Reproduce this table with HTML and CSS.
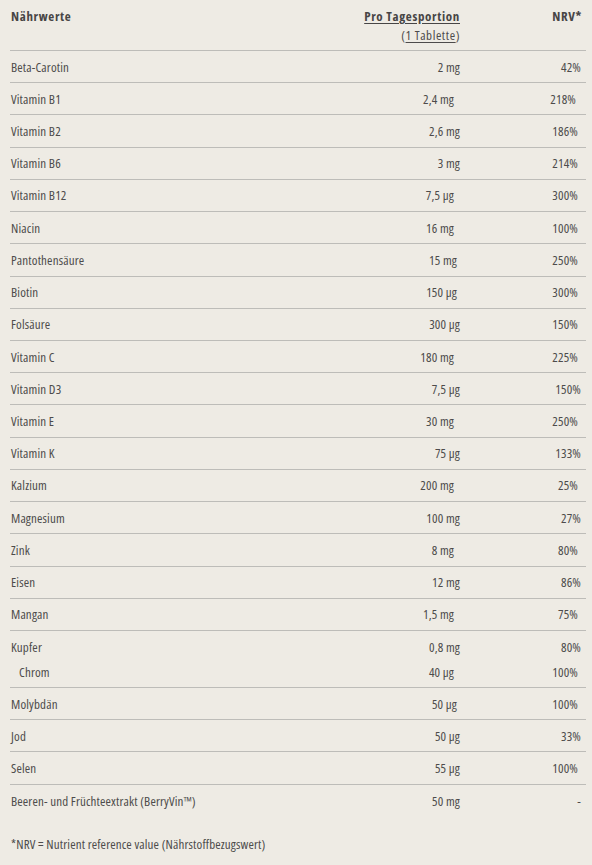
FILE: index.html
```html
<!DOCTYPE html>
<html lang="de">
<head>
<meta charset="utf-8">
<title>Nährwerte</title>
<link rel="stylesheet" href="styles.css">
</head>
<body>
<div class="wrap">
  <div class="table">
    <div class="row head">
      <div class="c1">Nährwerte</div>
      <div class="c2"><span class="u">Pro Tagesportion</span><br><span class="sub">(<span class="u">1 Tablette</span>)</span></div>
      <div class="c3">NRV*</div>
    </div>
    <div class="row"><div class="c1">Beta-Carotin</div><div class="c2">2 mg</div><div class="c3">42%</div></div>
    <div class="row"><div class="c1">Vitamin B1</div><div class="c2 i2">2,4 mg</div><div class="c3 i2">218%</div></div>
    <div class="row"><div class="c1">Vitamin B2</div><div class="c2">2,6 mg</div><div class="c3 i1">186%</div></div>
    <div class="row"><div class="c1">Vitamin B6</div><div class="c2">3 mg</div><div class="c3 i1">214%</div></div>
    <div class="row"><div class="c1">Vitamin B12</div><div class="c2 i2">7,5 µg</div><div class="c3 i1">300%</div></div>
    <div class="row"><div class="c1">Niacin</div><div class="c2 i2">16 mg</div><div class="c3 i1">100%</div></div>
    <div class="row"><div class="c1">Pantothensäure</div><div class="c2 i1">15 mg</div><div class="c3 i1">250%</div></div>
    <div class="row"><div class="c1">Biotin</div><div class="c2 i1">150 µg</div><div class="c3 i1">300%</div></div>
    <div class="row"><div class="c1">Folsäure</div><div class="c2">300 µg</div><div class="c3 i1">150%</div></div>
    <div class="row"><div class="c1">Vitamin C</div><div class="c2 i2">180 mg</div><div class="c3 i1">225%</div></div>
    <div class="row"><div class="c1">Vitamin D3</div><div class="c2">7,5 µg</div><div class="c3">150%</div></div>
    <div class="row"><div class="c1">Vitamin E</div><div class="c2 i2">30 mg</div><div class="c3 i1">250%</div></div>
    <div class="row"><div class="c1">Vitamin K</div><div class="c2">75 µg</div><div class="c3">133%</div></div>
    <div class="row"><div class="c1">Kalzium</div><div class="c2 i2">200 mg</div><div class="c3 i1">25%</div></div>
    <div class="row"><div class="c1">Magnesium</div><div class="c2">100 mg</div><div class="c3">27%</div></div>
    <div class="row"><div class="c1">Zink</div><div class="c2 i2">8 mg</div><div class="c3 i1">80%</div></div>
    <div class="row"><div class="c1">Eisen</div><div class="c2">12 mg</div><div class="c3">86%</div></div>
    <div class="row"><div class="c1">Mangan</div><div class="c2 i2">1,5 mg</div><div class="c3 i1">75%</div></div>
    <div class="row double">
      <div class="c1">Kupfer</div><div class="c2">0,8 mg</div><div class="c3">80%</div>
      <div class="c1 indent">Chrom</div><div class="c2 i2">40 µg</div><div class="c3 i1">100%</div>
    </div>
    <div class="row"><div class="c1">Molybdän</div><div class="c2 i1">50 µg</div><div class="c3 i1">100%</div></div>
    <div class="row"><div class="c1">Jod</div><div class="c2">50 µg</div><div class="c3">33%</div></div>
    <div class="row"><div class="c1">Selen</div><div class="c2">55 µg</div><div class="c3 i1">100%</div></div>
    <div class="row last"><div class="c1">Beeren- und Früchteextrakt (BerryVin™)</div><div class="c2">50 mg</div><div class="c3">-</div></div>
  </div>
  <p class="note">*NRV = Nutrient reference value (Nährstoffbezugswert)</p>
</div>
</body>
</html>
```

FILE: styles.css
```css
html, body {
  margin: 0;
  padding: 0;
  background: #eeebe4;
}
body {
  font-family: "Open Sans", Lato, sans-serif;
  font-stretch: 75%;
  font-size: 13px;
  letter-spacing: 0.15px;
  color: #4d4b4b;
}
.wrap {
  padding: 0 6px 0 10px;
}
.table {
  display: flex;
  flex-direction: column;
}
.row {
  display: grid;
  grid-template-columns: 1fr 120px 126px;
  line-height: 16px;
  padding: 7.62px 0;
  border-bottom: 1px solid #bdbcb8;
}
.row.head {
  padding: 8px 0 7px;
  font-weight: 700;
  letter-spacing: 0.65px;
  color: #474545;
}
.row.head .c3 {
  padding-right: 4px;
}
.row.head .sub {
  display: inline-block;
  margin-top: 3px;
  font-weight: 400;
  letter-spacing: 0.6px;
  color: #4d4b4b;
}
.u {
  text-decoration: underline;
  text-underline-offset: 2px;
}
.row.double {
  padding: 8px 0 7px;
  row-gap: 9px;
}
.row.last {
  border-bottom: none;
  padding-top: 8px;
}
.c1 {
  padding-left: 1px;
}
.c1.indent {
  padding-left: 9px;
}
.c2 {
  text-align: right;
}
.c3 {
  text-align: right;
  padding-right: 5px;
}
.c2.i1 { padding-right: 3px; }
.c2.i2 { padding-right: 6px; }
.c3.i1 { padding-right: 8px; }
.c3.i2 { padding-right: 10px; }
.note {
  margin: 20px 0 0;
  padding-left: 1px;
  line-height: 16px;
}
```
